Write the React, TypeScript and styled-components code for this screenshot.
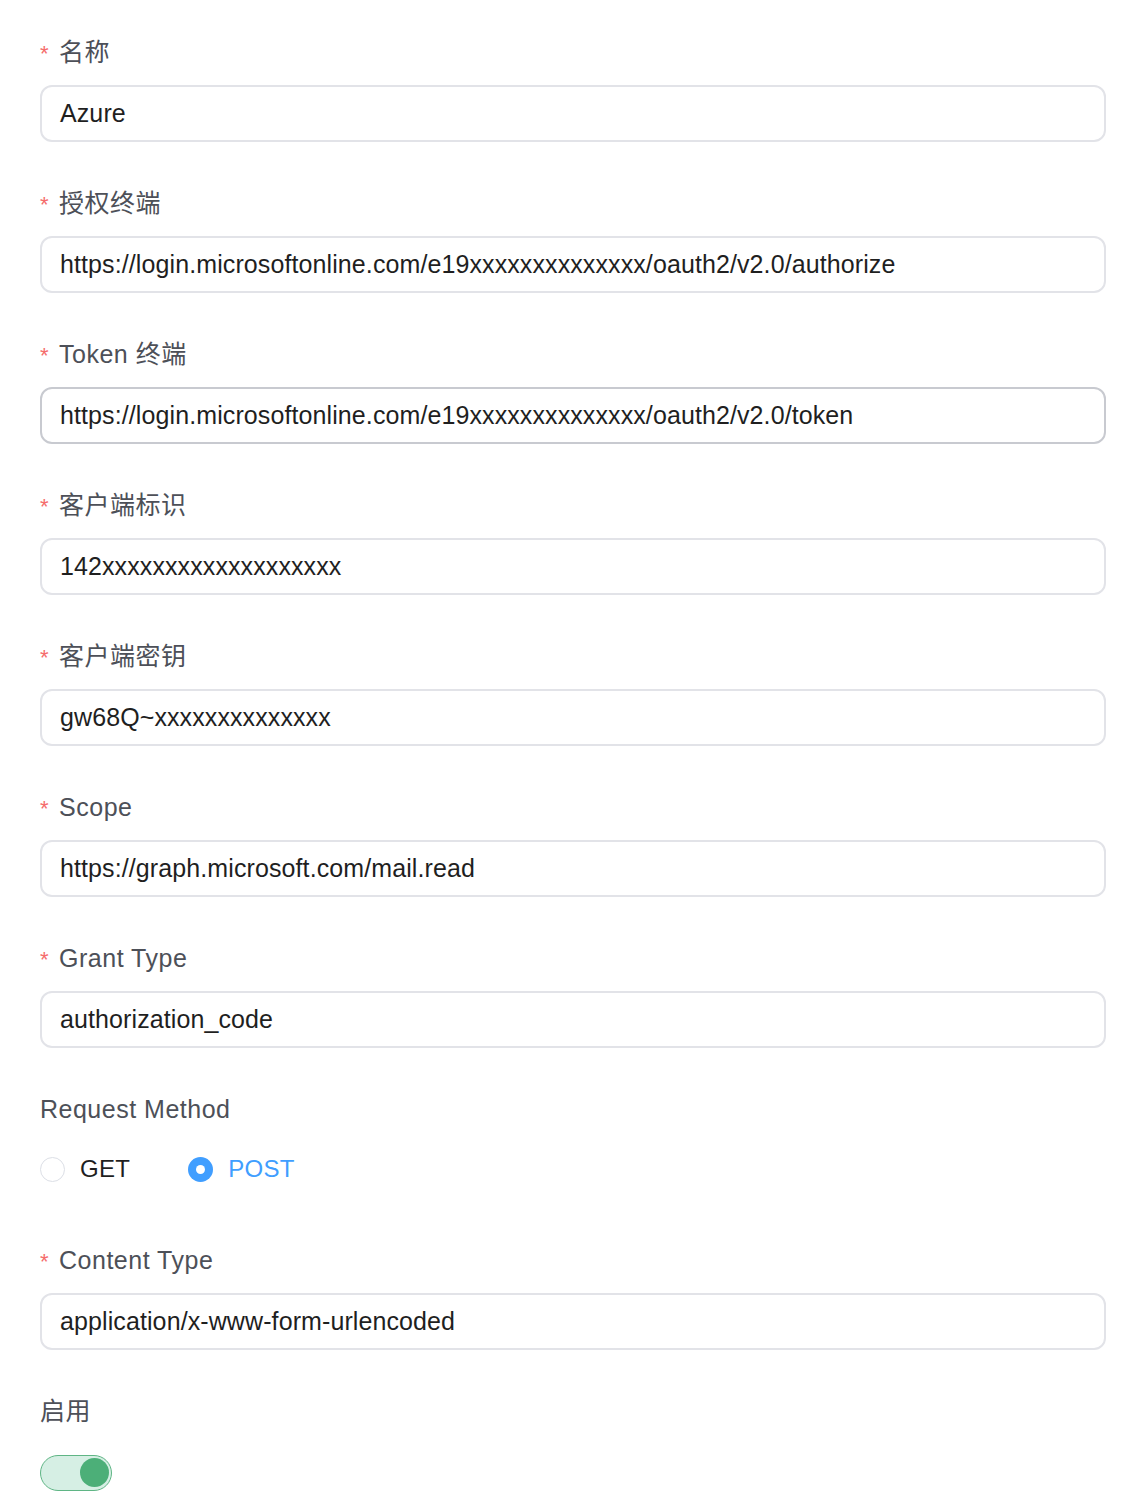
import React from "react";
import styled, { createGlobalStyle } from "styled-components";

const Global = createGlobalStyle`
  html, body { margin: 0; padding: 0; background: #fff; }
  body { font-family: "Liberation Sans", "Noto Sans CJK SC", Arial, sans-serif; }
`;

const Form = styled.div`
  padding: 34px 36px 0 40px;
  display: flex;
  flex-direction: column;
`;

const Item = styled.div<{ $gap?: number }>`
  display: flex;
  flex-direction: column;
  margin-bottom: ${(p) => (p.$gap ?? 43)}px;
`;

const Label = styled.div`
  height: 36px;
  line-height: 36px;
  margin-bottom: 15px;
  font-size: 25px;
  letter-spacing: 0.5px;
  color: #4d5058;
  display: flex;
  align-items: center;
`;

const Star = styled.span`
  color: #f56c6c;
  font-size: 22px;
  margin-right: 10px;
  position: relative;
  top: 2px;
`;

const Input = styled.div<{ $strong?: boolean }>`
  box-sizing: border-box;
  height: 57px;
  border: 2px solid ${(p) => (p.$strong ? "#c8cad0" : "#e2e3e8")};
  border-radius: 12px;
  padding: 0 18px;
  display: flex;
  align-items: center;
  font-size: 25px;
  letter-spacing: 0.1px;
  color: #1f1f1f;
  white-space: nowrap;
  overflow: hidden;
`;

const RadioGroup = styled.div`
  height: 54px;
  display: flex;
  align-items: center;
  gap: 58px;
`;

const Radio = styled.label<{ $checked?: boolean }>`
  display: flex;
  align-items: center;
  gap: 15px;
  font-size: 24px;
  letter-spacing: 0.3px;
  color: ${(p) => (p.$checked ? "#409eff" : "#1f1f1f")};
`;

const Circle = styled.span<{ $checked?: boolean }>`
  box-sizing: border-box;
  width: 25px;
  height: 25px;
  border-radius: 50%;
  border: ${(p) => (p.$checked ? "none" : "1.5px solid #dcdfe6")};
  background: ${(p) => (p.$checked ? "#409eff" : "#fff")};
  display: flex;
  align-items: center;
  justify-content: center;
  &::after {
    content: "";
    display: ${(p) => (p.$checked ? "block" : "none")};
    width: 9px;
    height: 9px;
    border-radius: 50%;
    background: #fff;
  }
`;

const SwitchRow = styled.div`
  height: 57px;
  display: flex;
  align-items: center;
`;

const Switch = styled.div<{ $on?: boolean }>`
  box-sizing: border-box;
  width: 72px;
  height: 36px;
  border-radius: 18px;
  border: 1.5px solid #5fb585;
  background: #d6efe4;
  display: flex;
  align-items: center;
  justify-content: ${(p) => (p.$on ? "flex-end" : "flex-start")};
  padding: 0 2px;
  &::after {
    content: "";
    width: 29px;
    height: 29px;
    border-radius: 50%;
    background: #4caf78;
  }
`;

const fields: { label: string; value: string; strong?: boolean }[] = [
  { label: "名称", value: "Azure" },
  { label: "授权终端", value: "https://login.microsoftonline.com/e19xxxxxxxxxxxxxx/oauth2/v2.0/authorize" },
  { label: "Token 终端", value: "https://login.microsoftonline.com/e19xxxxxxxxxxxxxx/oauth2/v2.0/token", strong: true },
  { label: "客户端标识", value: "142xxxxxxxxxxxxxxxxxxx" },
  { label: "客户端密钥", value: "gw68Q~xxxxxxxxxxxxxx" },
  { label: "Scope", value: "https://graph.microsoft.com/mail.read" },
  { label: "Grant Type", value: "authorization_code" },
];

export default function App() {
  return (
    <>
      <Global />
      <Form>
        {fields.map((f) => (
          <Item key={f.label}>
            <Label>
              <Star>*</Star>
              {f.label}
            </Label>
            <Input $strong={f.strong}>{f.value}</Input>
          </Item>
        ))}
        <Item $gap={46}>
          <Label>Request Method</Label>
          <RadioGroup>
            <Radio>
              <Circle />
              GET
            </Radio>
            <Radio $checked>
              <Circle $checked />
              POST
            </Radio>
          </RadioGroup>
        </Item>
        <Item>
          <Label>
            <Star>*</Star>
            Content Type
          </Label>
          <Input>application/x-www-form-urlencoded</Input>
        </Item>
        <Item $gap={0}>
          <Label>启用</Label>
          <SwitchRow>
            <Switch $on />
          </SwitchRow>
        </Item>
      </Form>
    </>
  );
}
